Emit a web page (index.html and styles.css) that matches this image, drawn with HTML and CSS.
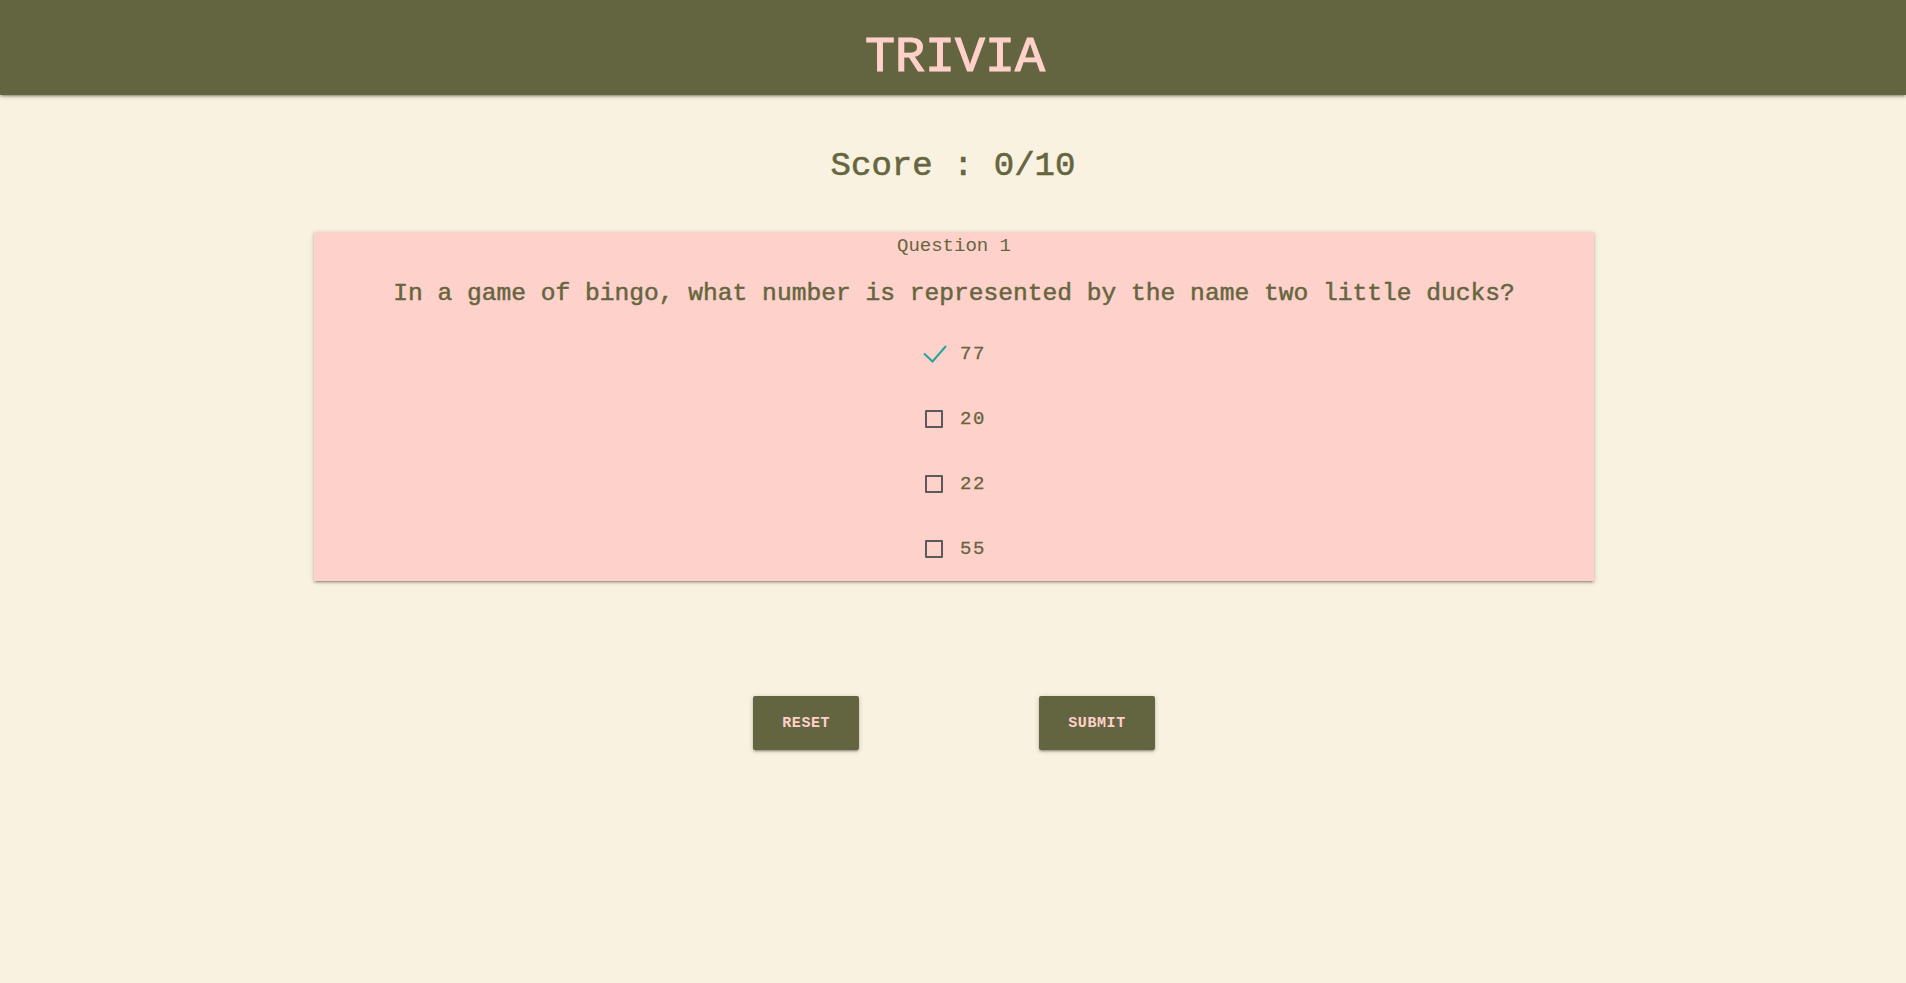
FILE: index.html
```html
<!DOCTYPE html>
<html lang="en">
<head>
<meta charset="utf-8">
<title>Trivia</title>
<link rel="stylesheet" href="styles.css">
</head>
<body>
<header class="topbar">
  <h1 class="title">TRIVIA</h1>
</header>
<main class="main">
  <h2 class="score">Score : 0/10</h2>
  <section class="card">
    <div class="qnum">Question 1</div>
    <div class="qtext">In a game of bingo, what number is represented by the name two little ducks?</div>
    <ul class="options">
      <li class="option">
        <label class="opt-label">
          <svg class="tick" width="24" height="18" viewBox="0 0 24 18"><polyline points="1,8.5 9.5,16.5 23,1" fill="none" stroke="#26a69a" stroke-width="2"/></svg>
          <span class="opt-text">77</span>
        </label>
      </li>
      <li class="option">
        <label class="opt-label"><span class="box"></span><span class="opt-text">20</span></label>
      </li>
      <li class="option">
        <label class="opt-label"><span class="box"></span><span class="opt-text">22</span></label>
      </li>
      <li class="option">
        <label class="opt-label"><span class="box"></span><span class="opt-text">55</span></label>
      </li>
    </ul>
  </section>
  <div class="actions">
    <button class="btn btn-reset">RESET</button>
    <button class="btn btn-submit">SUBMIT</button>
  </div>
</main>
</body>
</html>
```
FILE: styles.css
```css
html, body {
  margin: 0;
  padding: 0;
}
body {
  background: #faf2e0;
  font-family: "Liberation Mono", "Courier New", monospace;
  color: #65663f;
  min-height: 983px;
}
.topbar {
  height: 95px;
  box-sizing: border-box;
  padding-top: 21px;
  background: #636440;
  display: flex;
  align-items: center;
  justify-content: center;
  box-shadow: 0 2px 2px 0 rgba(0,0,0,.14), 0 3px 1px -2px rgba(0,0,0,.12), 0 1px 5px 0 rgba(0,0,0,.2);
}
.title {
  margin: 0;
  font-size: 50px;
  line-height: 60px;
  font-weight: normal;
  -webkit-text-stroke: 1.2px #ffd1c9;
  color: #ffd1c9;
  padding-left: 4px;
}
.main {
  display: flex;
  flex-direction: column;
  align-items: center;
}
.score {
  margin: 51px 0 0;
  font-size: 34px;
  line-height: 40px;
  font-weight: normal;
  -webkit-text-stroke: 0.6px #65663f;
  color: #65663f;
}
.card {
  margin-top: 46px;
  width: 1280px;
  margin-left: 2px;
  background: #ffd1cb;
  box-shadow: 0 2px 2px 0 rgba(0,0,0,.14), 0 3px 1px -2px rgba(0,0,0,.12), 0 1px 5px 0 rgba(0,0,0,.2);
  display: flex;
  flex-direction: column;
  align-items: center;
  padding-top: 1px;
}
.qnum {
  font-size: 19px;
  line-height: 26px;
}
.qtext {
  margin-top: 20px;
  font-size: 24.6px;
  line-height: 30px;
  font-weight: normal;
  -webkit-text-stroke: 0.5px #65663f;
}
.options {
  list-style: none;
  margin: 12px 0 0 3px;
  padding: 0;
  display: flex;
  flex-direction: column;
  align-items: center;
}
.option {
  height: 65px;
  display: flex;
  align-items: center;
}
.opt-label {
  display: flex;
  align-items: center;
  gap: 17px;
}
.box {
  width: 18px;
  height: 18px;
  box-sizing: border-box;
  border: 2px solid #5a5a5a;
  border-radius: 1px;
}
.tick {
  margin-left: -2px;
  margin-right: -4px;
}
.opt-text {
  font-size: 19px;
  letter-spacing: 1.5px;
  font-weight: normal;
  -webkit-text-stroke: 0.3px #65663f;
}
.actions {
  margin-top: 115px;
  display: flex;
  gap: 180px;
  margin-left: 2px;
}
.btn {
  height: 54px;
  padding: 0 29px;
  border: none;
  border-radius: 2px;
  background: #636440;
  color: #ffd1c9;
  font-family: "Liberation Mono", "Courier New", monospace;
  font-size: 15px;
  font-weight: bold;
  letter-spacing: 0.6px;
  box-shadow: 0 2px 2px 0 rgba(0,0,0,.14), 0 3px 1px -2px rgba(0,0,0,.12), 0 1px 5px 0 rgba(0,0,0,.2);
}
```
